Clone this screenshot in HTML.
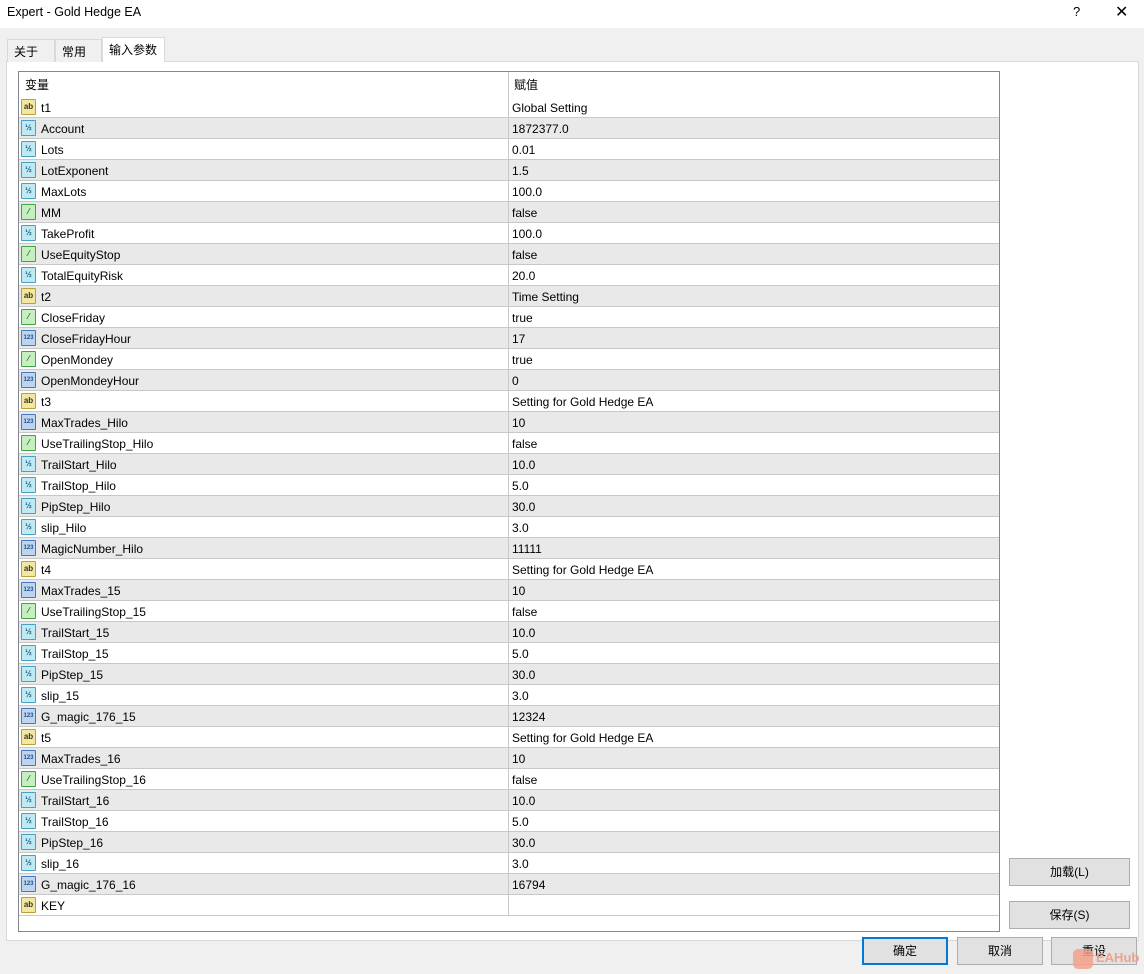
<!DOCTYPE html>
<html><head><meta charset="utf-8"><style>
*{margin:0;padding:0;box-sizing:border-box}
body{width:1144px;height:974px;background:#f0f0f0;font-family:"Segoe UI","Liberation Sans","Noto Sans CJK SC",sans-serif;font-size:12px;color:#000;position:relative;overflow:hidden}
.title{position:absolute;left:0;top:0;width:1144px;height:28px;background:#fff}
.title span{position:absolute;left:7px;top:5px;font-size:12.5px}
.q{position:absolute;left:1073px;top:4px;font-size:13px}
.x{position:absolute;left:1115px;top:2px;font-size:16px}
.tab{position:absolute;top:39px;height:23px;border:1px solid #d9d9d9;border-bottom:none;background:#f0f0f0;padding:3px 0 0 6px}
.panel{position:absolute;left:6px;top:61px;width:1133px;height:880px;border:1px solid #d9d9d9;background:#fff}
.grid{position:absolute;left:18px;top:71px;width:982px;height:861px;border:1px solid #828790;background:#fff}
.hdr{position:absolute;left:0;top:0;width:980px;height:25px}
.hdr span{position:absolute;top:4px}
.rows{position:absolute;left:0;top:1px;width:980px}
.row{position:absolute;left:0;width:980px;height:21px;border-bottom:1px solid #c8c8c8}
.row.g{background:#e9e9e9}
.row .n{position:absolute;left:22px;top:4px}
.row .v{position:absolute;left:493px;top:4px}
.row:after{content:"";position:absolute;left:489px;top:0;width:1px;height:20px;background:#c8c8c8}
.hdr:after{content:"";position:absolute;left:489px;top:0;width:1px;height:25px;background:#c8c8c8}
.ic{position:absolute;left:2px;top:2px;width:15px;height:16px;border:1px solid;font-size:8px;line-height:14px;text-align:center;font-weight:bold;border-radius:1px}
.ab{background:#f3e7a0;border-color:#b8a040;color:#333}
.db{background:#bfe9f3;border-color:#4aa0c0;color:#1a5f80}
.bo{background:#c6efc0;border-color:#48a048;color:#276627}
.in{background:#bcd4f0;border-color:#4a78b8;color:#1f4f90;font-size:6px}
.btn{position:absolute;height:28px;border:1px solid #adadad;background:#e1e1e1;text-align:center;line-height:26px;font-size:12px}
</style></head><body>
<div class="title"><span>Expert - Gold Hedge EA</span><div class="q">?</div><div class="x">✕</div></div>
<div class="panel"></div>
<div class="tab" style="left:7px;width:48px">关于</div>
<div class="tab" style="left:55px;width:47px">常用</div>
<div class="tab" style="left:102px;top:37px;height:25px;width:63px;background:#fff;border-color:#d9d9d9">输入参数</div>
<div class="grid">
<div class="hdr"><span style="left:6px">变量</span><span style="left:495px">赋值</span></div>
<div class="rows">
<div class="row" style="top:24px"><div class="ic ab">ab</div><span class="n">t1</span><span class="v">Global Setting</span></div>
<div class="row g" style="top:45px"><div class="ic db">½</div><span class="n">Account</span><span class="v">1872377.0</span></div>
<div class="row" style="top:66px"><div class="ic db">½</div><span class="n">Lots</span><span class="v">0.01</span></div>
<div class="row g" style="top:87px"><div class="ic db">½</div><span class="n">LotExponent</span><span class="v">1.5</span></div>
<div class="row" style="top:108px"><div class="ic db">½</div><span class="n">MaxLots</span><span class="v">100.0</span></div>
<div class="row g" style="top:129px"><div class="ic bo">⁄</div><span class="n">MM</span><span class="v">false</span></div>
<div class="row" style="top:150px"><div class="ic db">½</div><span class="n">TakeProfit</span><span class="v">100.0</span></div>
<div class="row g" style="top:171px"><div class="ic bo">⁄</div><span class="n">UseEquityStop</span><span class="v">false</span></div>
<div class="row" style="top:192px"><div class="ic db">½</div><span class="n">TotalEquityRisk</span><span class="v">20.0</span></div>
<div class="row g" style="top:213px"><div class="ic ab">ab</div><span class="n">t2</span><span class="v">Time Setting</span></div>
<div class="row" style="top:234px"><div class="ic bo">⁄</div><span class="n">CloseFriday</span><span class="v">true</span></div>
<div class="row g" style="top:255px"><div class="ic in">123</div><span class="n">CloseFridayHour</span><span class="v">17</span></div>
<div class="row" style="top:276px"><div class="ic bo">⁄</div><span class="n">OpenMondey</span><span class="v">true</span></div>
<div class="row g" style="top:297px"><div class="ic in">123</div><span class="n">OpenMondeyHour</span><span class="v">0</span></div>
<div class="row" style="top:318px"><div class="ic ab">ab</div><span class="n">t3</span><span class="v">Setting for Gold Hedge EA</span></div>
<div class="row g" style="top:339px"><div class="ic in">123</div><span class="n">MaxTrades_Hilo</span><span class="v">10</span></div>
<div class="row" style="top:360px"><div class="ic bo">⁄</div><span class="n">UseTrailingStop_Hilo</span><span class="v">false</span></div>
<div class="row g" style="top:381px"><div class="ic db">½</div><span class="n">TrailStart_Hilo</span><span class="v">10.0</span></div>
<div class="row" style="top:402px"><div class="ic db">½</div><span class="n">TrailStop_Hilo</span><span class="v">5.0</span></div>
<div class="row g" style="top:423px"><div class="ic db">½</div><span class="n">PipStep_Hilo</span><span class="v">30.0</span></div>
<div class="row" style="top:444px"><div class="ic db">½</div><span class="n">slip_Hilo</span><span class="v">3.0</span></div>
<div class="row g" style="top:465px"><div class="ic in">123</div><span class="n">MagicNumber_Hilo</span><span class="v">11111</span></div>
<div class="row" style="top:486px"><div class="ic ab">ab</div><span class="n">t4</span><span class="v">Setting for Gold Hedge EA</span></div>
<div class="row g" style="top:507px"><div class="ic in">123</div><span class="n">MaxTrades_15</span><span class="v">10</span></div>
<div class="row" style="top:528px"><div class="ic bo">⁄</div><span class="n">UseTrailingStop_15</span><span class="v">false</span></div>
<div class="row g" style="top:549px"><div class="ic db">½</div><span class="n">TrailStart_15</span><span class="v">10.0</span></div>
<div class="row" style="top:570px"><div class="ic db">½</div><span class="n">TrailStop_15</span><span class="v">5.0</span></div>
<div class="row g" style="top:591px"><div class="ic db">½</div><span class="n">PipStep_15</span><span class="v">30.0</span></div>
<div class="row" style="top:612px"><div class="ic db">½</div><span class="n">slip_15</span><span class="v">3.0</span></div>
<div class="row g" style="top:633px"><div class="ic in">123</div><span class="n">G_magic_176_15</span><span class="v">12324</span></div>
<div class="row" style="top:654px"><div class="ic ab">ab</div><span class="n">t5</span><span class="v">Setting for Gold Hedge EA</span></div>
<div class="row g" style="top:675px"><div class="ic in">123</div><span class="n">MaxTrades_16</span><span class="v">10</span></div>
<div class="row" style="top:696px"><div class="ic bo">⁄</div><span class="n">UseTrailingStop_16</span><span class="v">false</span></div>
<div class="row g" style="top:717px"><div class="ic db">½</div><span class="n">TrailStart_16</span><span class="v">10.0</span></div>
<div class="row" style="top:738px"><div class="ic db">½</div><span class="n">TrailStop_16</span><span class="v">5.0</span></div>
<div class="row g" style="top:759px"><div class="ic db">½</div><span class="n">PipStep_16</span><span class="v">30.0</span></div>
<div class="row" style="top:780px"><div class="ic db">½</div><span class="n">slip_16</span><span class="v">3.0</span></div>
<div class="row g" style="top:801px"><div class="ic in">123</div><span class="n">G_magic_176_16</span><span class="v">16794</span></div>
<div class="row" style="top:822px"><div class="ic ab">ab</div><span class="n">KEY</span><span class="v"></span></div>
</div>
</div>
<div class="btn" style="left:1009px;top:858px;width:121px">加载(L)</div>
<div class="btn" style="left:1009px;top:901px;width:121px">保存(S)</div>
<div class="btn" style="left:862px;top:937px;width:86px;border:2px solid #0078d7;line-height:24px">确定</div>
<div class="btn" style="left:957px;top:937px;width:86px">取消</div>
<div class="btn" style="left:1051px;top:937px;width:86px">重设</div>
<div style="position:absolute;left:1073px;top:949px;width:20px;height:20px;border-radius:5px;background:#f2a08a;opacity:.85"></div>
<div style="position:absolute;left:1096px;top:950px;color:#f2a08a;font-size:13px;font-weight:bold">EAHub</div>
</body></html>
